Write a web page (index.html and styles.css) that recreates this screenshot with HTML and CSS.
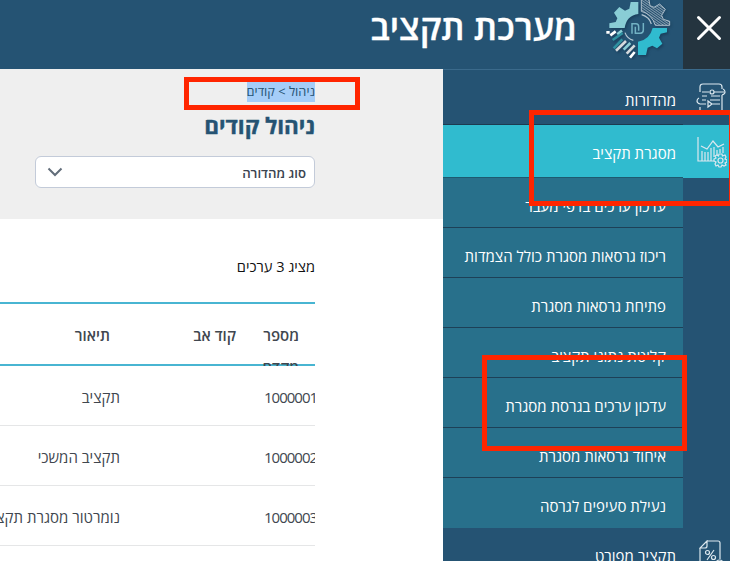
FILE: index.html
```html
<!DOCTYPE html>
<html lang="he" dir="rtl">
<head>
<meta charset="utf-8">
<title>מערכת תקציב</title>
<link rel="stylesheet" href="styles.css">
</head>
<body>
<div class="app">
  <header class="header">
    <button class="close" aria-label="סגירה">
      <svg width="26" height="26" viewBox="0 0 26 26"><path d="M2.500 2.500 23.500 23.500M23.500 2.500 2.500 23.500" fill="none" stroke="#fff" stroke-width="3" stroke-linecap="round"/></svg>
    </button>
    <svg class="logo" width="70" height="60" viewBox="45 0 210 180">
      <defs>
        <pattern id="hatch" width="6" height="6" patternUnits="userSpaceOnUse" patternTransform="rotate(35)"><path d="M0 1H6" stroke="#c3d0da" stroke-width="2.2"/></pattern>
      </defs>
      <g class="logo-shadow">
        <path fill="#89cdd5" d="M58 84V70L77 66 82 55 72 38 88 21 105 32 118 26 122 6H145V42Q109 47 104 84Z"/>
        <path fill="url(#hatch)" stroke="#c3d0da" stroke-width="2.5" d="M154-6V34Q185 42 196 76H239V64L220 58 215 46 226 28 209 12 192 22 180 17 176-6Z"/>
        <path fill="#30bbcf" d="M188 84H231V97L212 101 207 113 217 131 201 145 187 137 173 143 168 165H144V125Q179 120 188 84Z"/>
        <g fill="none" stroke-width="8">
          <path stroke="#fff" d="M49 97H59M61 106 77 94M120 173 134 156"/>
          <path stroke="#89cdd5" d="M82 103 96 92M101 149 121 129"/>
          <path stroke="#2f91a0" d="M68 120 98 99M71 145 97 118"/>
          <path stroke="#d5dadd" d="M78 152 108 123M110 161 134 136"/>
        </g>
      </g>
      <path d="M155 44Q178 51 184 72M105 98Q111 116 130 121" fill="none" stroke="#b4c6d2" stroke-width="3.5"/>
      <path d="M126 101V71H138Q146 71 146 80V92M136 80V100H151Q160 99 160 90V69" fill="none" stroke="#72b2c4" stroke-width="4.5"/>
    </svg>
    <h1 class="brand">מערכת תקציב</h1>
  </header>

  <div class="body">
    <nav class="sidebar">
      <div class="item first">
        <span class="icon"><svg width="30" height="32" viewBox="0 0 30 32"><path d="M4 9V4Q4 1 7 1H23Q26 1 26 4V6M26 12V28Q26 31 23 31H7Q4 31 4 28V24M6 9H13M18 9H28M27 6Q29 7 29 9T26 12M6 13H11M15 13H24M6 17H10M14 17H24M4 21H10M16 21H24M3 15Q1 16 1 18T4 21M12 18 16 21 12 24Z"/><circle cx="16" cy="9" r="2"/></svg></span>
        <span class="label">מהדורות</span>
      </div>
      <div class="item active">
        <span class="icon"><svg width="30" height="31" viewBox="0 0 30 31"><path d="M1 0V24H17M5 24V14M8 24V15M11 24V15M14 24V11M17 20V10M20 18V13M23 16V12M26 16V10M4 9 10 12 16 4 21 10 27 7"/><circle cx="23.500" cy="23.500" r="2.500"/><path d="M22 17H25L25.500 19 28 18 29 20 28 22 30 23V25L28 26 29 28 27 29 25 28 24 30H22L21 28 19 29 18 27 19 25 17 24V22L19 21 18 19 20 18 21.500 19Z"/></svg></span>
        <span class="label">מסגרת תקציב</span>
      </div>
      <div class="submenu">
        <a class="sub">עדכון ערכים בדפי מעבר</a>
        <a class="sub">ריכוז גרסאות מסגרת כולל הצמדות</a>
        <a class="sub">פתיחת גרסאות מסגרת</a>
        <a class="sub">קליטת נתוני תקציב</a>
        <a class="sub">עדכון ערכים בגרסת מסגרת</a>
        <a class="sub">איחוד גרסאות מסגרת</a>
        <a class="sub">נעילת סעיפים לגרסה</a>
      </div>
      <div class="item last">
        <span class="icon"><svg width="26" height="32" viewBox="0 0 26 32"><path d="M8 1H19Q21 1 21 3V19M1 8V29Q1 31 3 31H15M8 1 1 8H6Q8 8 8 6ZM15 10 8 20"/><circle cx="8.500" cy="12.500" r="2"/><circle cx="14.500" cy="17.500" r="2"/><circle cx="20.500" cy="24" r="4"/></svg></span>
        <span class="label">תקציב מפורט</span>
      </div>
    </nav>

    <main class="main">
      <section class="intro">
        <div class="crumbs"><span>ניהול &gt; קודים</span></div>
        <h2 class="heading">ניהול קודים</h2>
        <div class="select"><span>סוג מהדורה</span>
          <svg width="16" height="10" viewBox="0 0 16 10"><path d="M1.500 1.500 8 8 14.500 1.500" fill="none" stroke="#626d7a" stroke-width="2"/></svg>
        </div>
      </section>
      <p class="count">מציג 3 ערכים</p>
      <div class="table">
        <div class="row head"><span class="c1">מספר<br>מקדם</span><span class="c2">קוד אב</span><span class="c3">תיאור</span></div>
        <div class="row"><span class="c1">1000001</span><span class="c2"></span><span class="c3">תקציב</span></div>
        <div class="row"><span class="c1">1000002</span><span class="c2"></span><span class="c3">תקציב המשכי</span></div>
        <div class="row"><span class="c1">1000003</span><span class="c2"></span><span class="c3">נומרטור מסגרת תקציב</span></div>
      </div>
    </main>
  </div>
  <div class="mark mark-crumbs"></div>
  <div class="mark mark-active"></div>
  <div class="mark mark-sub"></div>
</div>
</body>
</html>
```

FILE: styles.css
```css
* { box-sizing: border-box; }
body { margin: 0; background: #fff; font-family: "Open Sans", "Noto Sans", sans-serif; }
.app { position: relative; width: 730px; height: 561px; overflow: hidden; display: flex; flex-direction: column; }
.header { height: 69px; flex: none; display: flex; background: #255373; }
.close { width: 47px; height: 69px; border: 0; padding: 0 0 13px 4px; background: #24343f; display: flex; align-items: center; justify-content: center; }
.logo { margin-right: 8px; flex: none; }
.logo-shadow { filter: drop-shadow(4px 5px 3px rgba(10, 35, 60, .4)); }
.brand { margin: 0 28px 0 0; height: 54px; line-height: 54px; color: #fff; font-size: 35px; font-weight: 600; white-space: nowrap; -webkit-text-stroke: .3px #fff; }
.body { display: flex; height: 492px; }
.sidebar { width: 287px; flex: none; border-top: 1px solid #3b6a8b; background: #255373; color: #fff; font-size: 15px; }
.item { display: flex; font-weight: 500; }
.icon { width: 47px; flex: none; }
.icon svg { display: block; fill: none; stroke: #dce8ef; stroke-width: 1.200; }
.label { width: 240px; padding-right: 7px; white-space: nowrap; }
.first { height: 55px; }
.first .icon { padding: 13px 4px 0 0; }
.first .label { line-height: 61px; border-bottom: 1px solid #1d3a50; }
.active { height: 53px; background: #30bbcf; }
.active .icon { padding: 12px 3px 0 0; }
.active .label { line-height: 56px; border-bottom: 1px solid #1d5a70; }
.submenu { width: 240px; margin-right: 47px; background: #28708b; }
.sub { display: block; height: 50px; line-height: 57px; padding-right: 17px; border-bottom: 1px solid #1d4057; font-weight: 500; white-space: nowrap; }
.sub:last-child { border-bottom: 0; }
.last .icon { padding: 12px 5px 0 0; }
.last .label { line-height: 57px; }
.main { width: 443px; min-width: 0; background: #fff; }
.intro { height: 150px; padding: 13px 128px 0 0; background: #efefef; color: #255373; }
.crumbs { height: 20px; font-size: 12.800px; line-height: 19px; }
.crumbs span { display: inline-block; background: #a5cdf8; height: 20px; white-space: nowrap; }
.heading { margin: 8px 0 0; height: 32px; line-height: 32px; font-size: 22.500px; font-weight: 700; white-space: nowrap; -webkit-text-stroke: .4px #255373; }
.select { margin-top: 14px; width: 280px; height: 32px; border: 1px solid #c3cbd9; border-radius: 6px; background: #fff; padding: 0 8px 0 11px; display: flex; align-items: center; justify-content: space-between; font-size: 13.200px; font-weight: 600; color: #3b4450; }
.select span { padding-top: 1px; }
.count { margin: 36px 128px 0 0; height: 24px; line-height: 23px; font-size: 14.600px; color: #111; }
.table { width: 315px; margin: 23px 128px 0 0; color: #41474f; font-size: 15px; overflow: hidden; }
.row { display: flex; height: 60px; line-height: 62px; border-bottom: 1px solid #e5e6e7; white-space: nowrap; }
.head { height: 64px; line-height: 32px; padding-top: 15px; border-top: 2px solid #48b5d2; border-bottom: 0; box-shadow: inset 0 -2px #48b5d2; font-weight: 600; overflow: hidden; }
.c1 { width: 79px; flex: none; padding-right: 16px; }
.row:not(.head) .c1 { padding: 0; width: 51px; direction: ltr; overflow: hidden; letter-spacing: -1px; }
.c2 { width: 126px; flex: none; }
.row:not(.head) .c2 { width: 144px; }
.c3 { flex: none; }
.mark { position: absolute; border: 5px solid #ff2500; }
.mark-crumbs { left: 184px; top: 77px; width: 176px; height: 33px; }
.mark-active { left: 529px; top: 110px; width: 205px; height: 96px; }
.mark-sub { left: 482px; top: 355px; width: 205px; height: 96px; }
```
